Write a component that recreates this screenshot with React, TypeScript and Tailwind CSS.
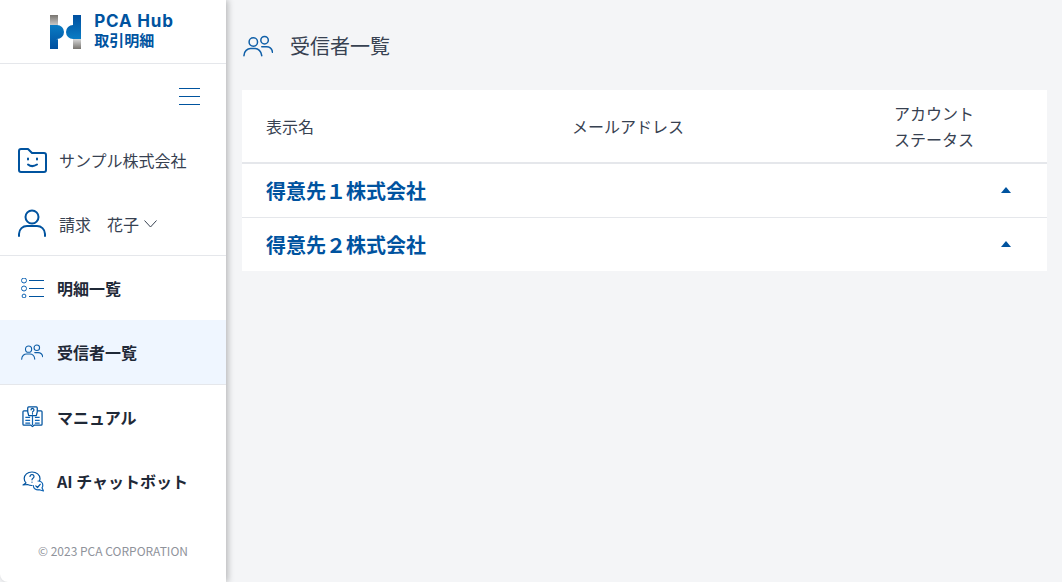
const blue = "#00539f";

function Logo() {
  return (
    <svg width="31" height="34" viewBox="0 0 31 34" className="block">
      <defs>
        <linearGradient id="lg-grey-top" x1="0" y1="0" x2="0" y2="1">
          <stop offset="0" stopColor="#77746f" />
          <stop offset="1" stopColor="#d8d8d8" />
        </linearGradient>
        <linearGradient id="lg-grey-bottom" x1="0" y1="0" x2="0" y2="1">
          <stop offset="0" stopColor="#d8d8d8" />
          <stop offset="1" stopColor="#77746f" />
        </linearGradient>
        <linearGradient id="lg-blue-left" x1="0" y1="0" x2="0" y2="1">
          <stop offset="0" stopColor="#0a7cc4" />
          <stop offset="1" stopColor="#004f9f" />
        </linearGradient>
        <linearGradient id="lg-blue-right" x1="0" y1="0" x2="0" y2="1">
          <stop offset="0" stopColor="#004f9f" />
          <stop offset="1" stopColor="#0a7cc4" />
        </linearGradient>
      </defs>
      <rect x="0" y="0" width="8" height="12" fill="url(#lg-grey-top)" />
      <path d="M0 10h7a7 7 0 0 1 0 14h-0.500a1.500 1.500 0 0 0 1.500 0v10h-8z" fill="url(#lg-blue-left)" />
      <path d="M23 0h8v24h-8a7 7 0 0 1 0-14z" fill="url(#lg-blue-right)" />
      <rect x="23" y="24" width="8" height="10" fill="url(#lg-grey-bottom)" />
    </svg>
  );
}

function Hamburger() {
  return (
    <svg width="22" height="18" viewBox="0 0 22 18" stroke={blue} strokeWidth="1" className="block">
      <path d="M0 0.500h21M0 8.500h21M0 16.500h21" />
    </svg>
  );
}

function FolderSmile() {
  return (
    <svg width="29" height="25" viewBox="0 0 29 25" fill="none" stroke={blue} strokeWidth="2" strokeLinejoin="round" strokeLinecap="round" className="block">
      <path d="M1 3a2 2 0 0 1 2-2h7l4 4h12a2 2 0 0 1 2 2v15a2 2 0 0 1-2 2H3a2 2 0 0 1-2-2z" />
      <path d="M10 10.500v1M19 10.500v1" />
      <path d="M10 16.500c2.500 2 6 2 9 0" />
    </svg>
  );
}

function UserIcon() {
  return (
    <svg width="28" height="28" viewBox="0 0 28 28" fill="none" stroke={blue} strokeWidth="2" strokeLinecap="round" className="block">
      <circle cx="14" cy="8" r="6.500" />
      <path d="M1 27v-2c0-5 4-8 8-8h10c4 0 8 3 8 8v2" />
    </svg>
  );
}

function ListIcon() {
  return (
    <svg width="24" height="20" viewBox="0 0 24 20" fill="none" stroke={blue} strokeWidth="1" className="block">
      <circle cx="3" cy="2.500" r="2.500" stroke="#0f64b4" />
      <circle cx="3" cy="10.500" r="2.500" stroke="#0f64b4" />
      <circle cx="3" cy="18" r="1.900" stroke="#0f64b4" />
      <path d="M8 2.500h15M8 10.500h15M8 18.500h15" />
    </svg>
  );
}

function UsersIcon({ size }: { size: number }) {
  return (
    <svg width={size} height={size * 0.72} viewBox="0 0 32 23" fill="none" stroke="#0f5fa8" strokeWidth="1.600" strokeLinecap="round" className="block">
      <circle cx="11" cy="7.500" r="4.500" />
      <circle cx="23" cy="5.500" r="4" />
      <path d="M1 22c0-5 4-7.500 7-7.500h5c3 0 6.500 2.500 7 7.500" />
      <path d="M20 12.500h5c3 0 6 2 6.500 6" />
    </svg>
  );
}

function ManualIcon() {
  return (
    <svg width="21" height="22" viewBox="0 0 22 23" fill="none" stroke={blue} strokeWidth="1.300" strokeLinejoin="round" className="ml-[1px] block">
      <path d="M6 6V2a1 1 0 0 1 1-1h8a1 1 0 0 1 1 1v4l-1 4h-8z" />
      <path d="M6 5H2a1 1 0 0 0-1 1v13a1 1 0 0 0 1 1h7l2 1.500 2-1.500h7a1 1 0 0 0 1-1V6a1 1 0 0 0-1-1h-4" />
      <path d="M11 10v10M3.500 12h5M3.500 15h5M3.500 18h5M13.500 12h5M13.500 15h5M13.500 18h5" stroke="#0f64b4" />
      <path d="M9.500 4a1.500 1.500 0 1 1 2.200 1.400c-.5.300-.7.600-.7 1.100M11 8v.4" strokeLinecap="round" />
    </svg>
  );
}

function ChatbotIcon() {
  return (
    <svg width="22" height="21" viewBox="0 0 22 21" fill="none" stroke={blue} strokeWidth="1.200" strokeLinejoin="round" strokeLinecap="round" className="ml-[1px] block">
      <path d="M10 1c4.500 0 8 2.800 8 6.500 0 .9-.2 1.600-.5 2.300M10 1C5.500 1 2.200 3.800 2.200 7.500c0 1.800.7 3.300 1.800 4.400L1 14l4.500-.500c1.300.6 2.900 1 4.500 1" />
      <path d="M8 5.500a2 2 0 1 1 3 1.800c-.7.400-1 .8-1 1.500M10 11v.2" />
      <path d="M16 10c2.800 0 4.800 2 4.800 4.300 0 1-.3 1.800-.8 2.500l1.500 3.200-4.200-1.300c-3.200.7-6-1.400-6-4.200" stroke="#0f64b4" />
      <path d="M13.800 14.800l1.700 1.700 2.700-3.200" />
    </svg>
  );
}

function NavItem({ icon, label, active }: { icon: React.ReactNode; label: string; active?: boolean }) {
  return (
    <div className={`flex h-16 items-center pl-[21px] ${active ? "bg-[#eff6ff]" : ""}`}>
      <div className="flex w-9 items-center">{icon}</div>
      <span className="text-[16px] font-bold text-[#1f2937]">{label}</span>
    </div>
  );
}

function CustomerRow({ name, last }: { name: string; last?: boolean }) {
  return (
    <div className={`flex items-center justify-between pl-6 pr-[36px] ${last ? "h-[53px]" : "h-[54px] border-b border-[#e5e7eb]"}`}>
      <span className="text-[20px] font-bold text-[#00539f]">{name}</span>
      <svg width="10" height="6" viewBox="0 0 10 6" fill={blue} className="mb-[2px] block">
        <path d="M5 0L10 6H0z" />
      </svg>
    </div>
  );
}

export default function App() {
  return (
    <div
      className="flex h-[582px] w-[1062px] overflow-hidden bg-[#f4f5f7] text-[#374151]"
      style={{ fontFamily: '"Noto Sans CJK JP", "Noto Sans", sans-serif' }}
    >
      <aside className="flex h-full w-[226px] shrink-0 flex-col rounded-bl-lg bg-white shadow-[2px_0_6px_rgba(0,0,0,0.25)]">
        <div className="flex h-16 items-center justify-center gap-[13px] border-b border-[#e5e7eb] pr-[2px]">
          <Logo />
          <div className="mb-[2px] flex flex-col text-[#00539f]">
            <span className="text-[17px] font-bold leading-[17px] tracking-[0.8px]" style={{ fontFamily: '"Inter", sans-serif' }}>PCA Hub</span>
            <span className="mt-[1px] text-[15px] font-bold leading-[17px]">取引明細</span>
          </div>
        </div>

        <div className="flex justify-end pr-[25px] pt-[24px]">
          <Hamburger />
        </div>

        <div className="mt-[34px] flex h-10 items-center pl-[18px]">
          <div className="w-[41px]"><FolderSmile /></div>
          <span className="text-[16px]">サンプル株式会社</span>
        </div>

        <div className="mt-[23px] flex h-[41px] items-center pl-[18px]">
          <div className="mb-[2px] w-[41px]"><UserIcon /></div>
          <span className="whitespace-pre text-[16px]">請求　花子</span>
          <svg width="13" height="8" viewBox="0 0 13 8" fill="none" stroke="#374151" strokeWidth="1" className="ml-[5px] block">
            <path d="M0.500 0.500L6.500 7L12.500 0.500" />
          </svg>
        </div>

        <div className="mt-[11px] border-t border-[#e5e7eb]">
          <NavItem icon={<ListIcon />} label="明細一覧" />
          <NavItem icon={<UsersIcon size={22} />} label="受信者一覧" active />
        </div>
        <div className="border-t border-[#e5e7eb]">
          <NavItem icon={<ManualIcon />} label="マニュアル" />
          <NavItem icon={<ChatbotIcon />} label="AI チャットボット" />
        </div>

        <div className="mt-auto pb-[22px] text-center text-[12px] text-[#8f939b]">© 2023 PCA CORPORATION</div>
      </aside>

      <main className="flex-1 pl-4 pr-[15px]">
        <div className="flex h-[90px] items-center gap-[17px] pl-[1px] pt-[2px]">
          <UsersIcon size={30} />
          <h1 className="text-[20px] font-normal">受信者一覧</h1>
        </div>

        <section className="bg-white">
          <div className="flex h-[74px] items-center border-b-2 border-[#e5e7eb] pl-6 text-[16px]">
            <div className="w-[306px]">表示名</div>
            <div className="w-[322px]">メールアドレス</div>
            <div className="leading-[26px]">
              アカウント
              <br />
              ステータス
            </div>
          </div>
          <CustomerRow name="得意先１株式会社" />
          <CustomerRow name="得意先２株式会社" last />
        </section>
      </main>
    </div>
  );
}
